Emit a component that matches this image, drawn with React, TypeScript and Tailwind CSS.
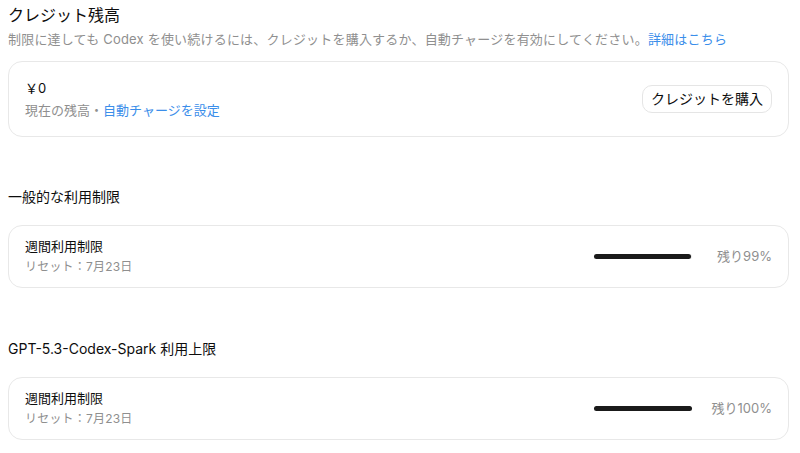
const font = { fontFamily: '"Inter", "Noto Sans CJK JP", sans-serif' }

interface LimitCardProps {
  title: string
  reset: string
  percent: number
}

function LimitCard({ title, reset, percent }: LimitCardProps) {
  return (
    <div className="flex items-center justify-between rounded-[14px] border border-[#e8e8e8] bg-white px-4 pb-[11px] pt-[10px]">
      <div className="flex flex-col">
        <span className="text-[13px] leading-[20px] text-[#0d0d0d]">{title}</span>
        <span className="mt-[2px] text-[12px] leading-[18px] tracking-[0.2px] text-[#8f8f8f]">{reset}</span>
      </div>
      <div className="flex items-center gap-4">
        <div className="h-[5px] w-[98px] rounded-full bg-[#ececec]">
          <div className="h-full rounded-full bg-[#1a1a1a]" style={{ width: `${percent}%` }} />
        </div>
        <span className="w-[64px] text-right text-[13px] leading-[20px] text-[#8f8f8f]">残り{percent}%</span>
      </div>
    </div>
  )
}

export default function App() {
  return (
    <div className="min-h-[453px] bg-white pl-2 pr-[11px] pt-[3px]" style={font}>
      <h1 className="text-[16px] leading-[24px] text-[#0d0d0d]">クレジット残高</h1>
      <p className="mt-[2px] text-[13px] leading-[20px] tracking-[0.2px] text-[#8f8f8f]">
        制限に達しても Codex を使い続けるには、クレジットを購入するか、自動チャージを有効にしてください。
        <span className="text-[#3b8eea]">詳細はこちら</span>
      </p>

      <div className="mt-3 flex items-center justify-between rounded-[14px] border border-[#e8e8e8] px-4 py-[16px]">
        <div className="flex flex-col">
          <span className="text-[13px] leading-[20px] text-[#0d0d0d]">￥0</span>
          <span className="mt-[2px] text-[13px] leading-[20px] text-[#8f8f8f]">
            現在の残高・<span className="text-[#3b8eea]">自動チャージを設定</span>
          </span>
        </div>
        <button className="h-[28px] rounded-[10px] border border-[#e5e5e5] px-2 text-[14px] leading-[20px] text-[#0d0d0d]">
          クレジットを購入
        </button>
      </div>

      <h2 className="mt-[50px] text-[14px] leading-[20px] text-[#0d0d0d]">一般的な利用制限</h2>
      <div className="mt-[18px]">
        <LimitCard title="週間利用制限" reset="リセット：7月23日" percent={99} />
      </div>

      <h2 className="mt-[51px] text-[14px] leading-[20px] text-[#0d0d0d]">GPT-5.3-Codex-Spark 利用上限</h2>
      <div className="mt-[18px]">
        <LimitCard title="週間利用制限" reset="リセット：7月23日" percent={100} />
      </div>
    </div>
  )
}
